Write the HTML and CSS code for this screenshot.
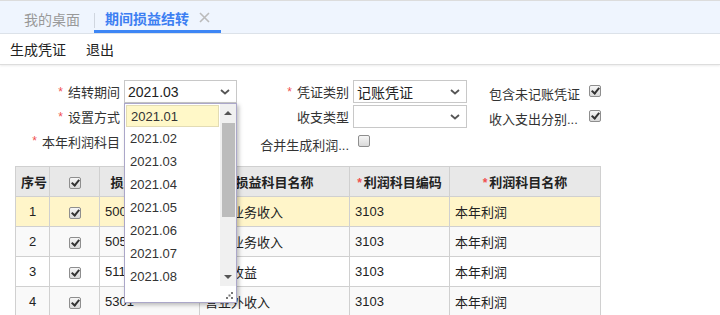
FILE: index.html
```html
<!DOCTYPE html>
<html lang="zh-CN">
<head>
    <meta charset="UTF-8">
    <meta name="viewport" content="width=device-width, initial-scale=1.0">
    <title>期间损益结转</title>
    <link rel="stylesheet" href="styles.css">
</head>
<body>
    <div class="tabs">
        <div class="tab">我的桌面</div>
        <div class="tab active">期间损益结转<svg class="tab-close" width="11" height="11" viewBox="0 0 11 11"><path d="M1 1l9 9M10 1l-9 9" stroke="#bbb" stroke-width="1.6"/></svg></div>
    </div>

    <div class="toolbar">
        <span class="tool-btn">生成凭证</span>
        <span class="tool-btn">退出</span>
    </div>

    <div class="form">
        <div class="label"><span class="req">*</span>结转期间</div>
        <div class="field">
            <div class="select">2021.03<svg class="arrow" width="10" height="6" viewBox="0 0 10 6"><path d="M1 1l4 3.5L9 1" fill="none" stroke="#555" stroke-width="1.8"/></svg></div>
            <div class="dropdown">
                <div class="dd-body">
                    <div class="dd-list">
                        <div class="dd-item selected">2021.01</div>
                        <div class="dd-item">2021.02</div>
                        <div class="dd-item">2021.03</div>
                        <div class="dd-item">2021.04</div>
                        <div class="dd-item">2021.05</div>
                        <div class="dd-item">2021.06</div>
                        <div class="dd-item">2021.07</div>
                        <div class="dd-item">2021.08</div>
                        <div class="dd-item">2021.09</div>
                    </div>
                    <div class="dd-scroll">
                        <span class="sc-up"></span>
                        <span class="sc-thumb"></span>
                        <span class="sc-down"></span>
                    </div>
                </div>
                <div class="dd-foot">
                    <svg width="7" height="7" viewBox="0 0 7 7"><rect x="5" y="0" width="2" height="2" fill="#777"/><rect x="5" y="5" width="2" height="2" fill="#777"/><rect x="0" y="5" width="2" height="2" fill="#777"/><rect x="2.5" y="2.5" width="2" height="2" fill="#777"/></svg>
                </div>
            </div>
        </div>
        <div class="label"><span class="req">*</span>凭证类别</div>
        <div class="field">
            <div class="select">记账凭证<svg class="arrow" width="10" height="6" viewBox="0 0 10 6"><path d="M1 1l4 3.5L9 1" fill="none" stroke="#555" stroke-width="1.8"/></svg></div>
        </div>
        <div class="label extra">包含未记账凭证</div>
        <div class="check-cell extra"><span class="chk on"></span></div>

        <div class="label"><span class="req">*</span>设置方式</div>
        <div class="field"></div>
        <div class="label">收支类型</div>
        <div class="field">
            <div class="select"><svg class="arrow" width="10" height="6" viewBox="0 0 10 6"><path d="M1 1l4 3.5L9 1" fill="none" stroke="#555" stroke-width="1.8"/></svg></div>
        </div>
        <div class="label extra">收入支出分别...</div>
        <div class="check-cell extra"><span class="chk on"></span></div>

        <div class="label"><span class="req">*</span>本年利润科目</div>
        <div class="field"></div>
        <div class="label low">合并生成利润...</div>
        <div class="check-cell inline"><span class="chk"></span></div>
    </div>

    <table class="grid">
        <colgroup>
            <col style="width:34px">
            <col style="width:50px">
            <col style="width:100px">
            <col style="width:150px">
            <col style="width:100px">
            <col style="width:151px">
        </colgroup>
        <thead>
            <tr>
                <th>序号</th>
                <th><span class="chk on"></span></th>
                <th>损益科目编码</th>
                <th>损益科目名称</th>
                <th><span class="req">*</span>利润科目编码</th>
                <th><span class="req">*</span>利润科目名称</th>
            </tr>
        </thead>
        <tbody>
            <tr class="current">
                <td class="num">1</td>
                <td class="num"><span class="chk on"></span></td>
                <td>5001</td>
                <td>主营业务收入</td>
                <td>3103</td>
                <td>本年利润</td>
            </tr>
            <tr class="alt">
                <td class="num">2</td>
                <td class="num"><span class="chk on"></span></td>
                <td>5051</td>
                <td>其他业务收入</td>
                <td>3103</td>
                <td>本年利润</td>
            </tr>
            <tr>
                <td class="num">3</td>
                <td class="num"><span class="chk on"></span></td>
                <td>5111</td>
                <td>投资收益</td>
                <td>3103</td>
                <td>本年利润</td>
            </tr>
            <tr class="alt">
                <td class="num">4</td>
                <td class="num"><span class="chk on"></span></td>
                <td>5301</td>
                <td>营业外收入</td>
                <td>3103</td>
                <td>本年利润</td>
            </tr>
        </tbody>
    </table>
</body>
</html>
```

FILE: styles.css
```css
body {
    margin: 0;
    font-family: "Liberation Sans", "Noto Sans CJK SC", sans-serif;
    font-size: 13px;
    color: #333;
    background: #fff;
    overflow: hidden;
}

/* tab bar */
.tabs {
    height: 32px;
    background: #eff5fe;
    border-top: 1px solid #dcdcdc;
    border-bottom: 1px solid #dde3ea;
    display: flex;
    padding-left: 10px;
}

.tab {
    font-size: 14px;
    color: #999;
    padding: 4px 14px 0;
    display: flex;
    align-items: center;
    position: relative;
}

.tab.active {
    color: #3d7ff2;
    font-weight: bold;
    padding: 0 11px;
    border-bottom: 3px solid #3d86f5;
    height: 25px;
    margin-top: 4px;
}

.tab.active::before {
    content: "";
    position: absolute;
    left: 0;
    top: 8px;
    height: 15px;
    border-left: 1px solid #d0d6df;
}

.tab-close {
    margin-left: 10px;
}

/* toolbar */
.toolbar {
    height: 30px;
    display: flex;
    align-items: center;
    gap: 20px;
    padding-left: 10px;
    border-bottom: 1px solid #ddd;
    box-shadow: 0 1px 2px rgba(0, 0, 0, 0.08);
}

.tool-btn {
    font-size: 14px;
    color: #222;
}

/* form */
.form {
    display: grid;
    grid-template-columns: 124px 113px 116px 114px 122px 20px;
    grid-template-rows: 23px 23px 22px;
    row-gap: 2px;
    padding-top: 15px;
}

.label {
    padding-right: 4px;
    display: flex;
    align-items: center;
    justify-content: flex-end;
    white-space: nowrap;
}

.label.extra {
    justify-content: flex-start;
    padding-left: 22px;
    padding-top: 4px;
}

.label.low {
    padding-top: 6px;
}

.req {
    color: #f05050;
    margin-right: 5px;
    font-size: 12px;
}

.field {
    position: relative;
}

.select {
    height: 21px;
    border: 1px solid #c8c8c8;
    background: #fff;
    display: flex;
    align-items: center;
    padding-left: 3px;
    font-size: 14px;
    color: #222;
    position: relative;
}

.arrow {
    position: absolute;
    right: 6px;
    top: 8px;
}

.check-cell {
    display: flex;
    align-items: flex-start;
    padding-top: 5px;
}

.check-cell.inline {
    grid-column: 4;
    padding-left: 5px;
}

.chk {
    display: inline-block;
    width: 10px;
    height: 10px;
    border: 1px solid #8e8e8e;
    border-radius: 2px;
    background: linear-gradient(#f6f6f6, #d9d9d9);
    vertical-align: middle;
    position: relative;
}

.chk.on::after {
    content: "";
    position: absolute;
    left: 3px;
    top: 0;
    width: 3px;
    height: 6px;
    border: solid #333;
    border-width: 0 2px 2px 0;
    transform: rotate(40deg);
}

/* dropdown list */
.dropdown {
    position: absolute;
    left: 0;
    top: 23px;
    width: 111px;
    height: 198px;
    background: #fff;
    border: 1px solid #aba7c9;
    box-shadow: 2px 2px 4px rgba(0, 0, 0, 0.25);
    z-index: 10;
    display: flex;
    flex-direction: column;
}

.dd-body {
    display: flex;
    height: 182px;
}

.dd-list {
    flex: 1;
    overflow: hidden;
}

.dd-item {
    height: 23px;
    line-height: 23px;
    padding-left: 5px;
    font-size: 13px;
    color: #333;
    box-sizing: border-box;
}

.dd-item.selected {
    background: #fff8c8;
    border: 1px solid #e3dcb4;
    line-height: 21px;
    padding-left: 4px;
    margin: 1px 1px 0 1px;
    height: 22px;
}

.dd-scroll {
    width: 16px;
    background: #f0f0f0;
    display: flex;
    flex-direction: column;
    align-items: center;
}

.sc-up,
.sc-down {
    width: 0;
    height: 0;
    border-left: 4px solid transparent;
    border-right: 4px solid transparent;
}

.sc-up {
    border-bottom: 4px solid #555;
    margin-top: 7px;
}

.sc-down {
    border-top: 4px solid #555;
    margin-top: 58px;
}

.sc-thumb {
    width: 13px;
    height: 94px;
    background: #bcbcbc;
    margin-top: 8px;
}

.dd-foot {
    flex: 1;
    display: flex;
    justify-content: flex-end;
    align-items: flex-end;
    padding: 0 3px 3px 0;
}

/* table */
.grid {
    margin: 14px 0 0 15px;
    border-collapse: collapse;
    table-layout: fixed;
    width: 585px;
}

.grid th,
.grid td {
    border: 1px solid #d0d0d0;
    height: 29px;
    padding: 0 5px;
    white-space: nowrap;
    overflow: hidden;
}

.grid th {
    background: #e8e8e8;
    font-weight: bold;
    color: #222;
    text-align: center;
}

.grid td {
    color: #222;
}

.grid td.num {
    text-align: center;
}

.grid th .req {
    margin-right: 2px;
}

.grid tr.current td {
    background: #fff5c9;
}

.grid tr.alt td {
    background: #f9f9f9;
}
```
